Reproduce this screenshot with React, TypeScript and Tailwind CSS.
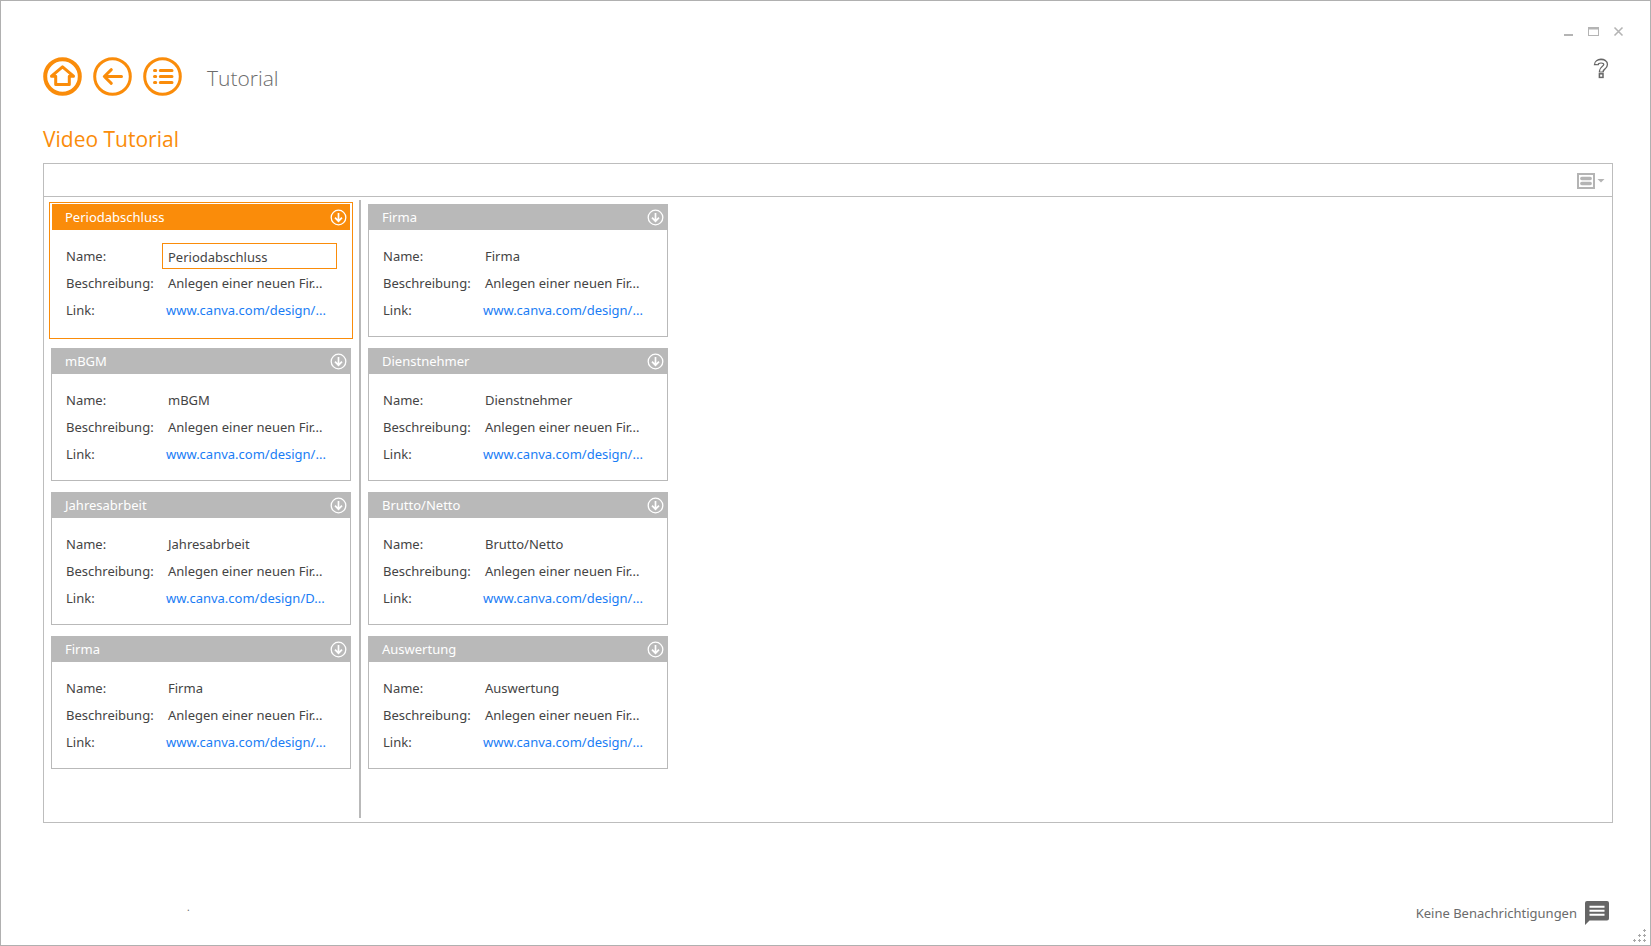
import React from 'react';

interface Tutorial {
  id: number;
  name: string;
  description: string;
  link: string;
}

const DESCRIPTION = 'Anlegen einer neuen Fir...';
const LINK = 'www.canva.com/design/...';

// Cards are filled column by column
const COLUMNS: Tutorial[][] = [
  [
    { id: 1, name: 'Periodabschluss', description: DESCRIPTION, link: LINK },
    { id: 2, name: 'mBGM', description: DESCRIPTION, link: LINK },
    { id: 3, name: 'Jahresabrbeit', description: DESCRIPTION, link: 'ww.canva.com/design/D...' },
    { id: 4, name: 'Firma', description: DESCRIPTION, link: LINK },
  ],
  [
    { id: 5, name: 'Firma', description: DESCRIPTION, link: LINK },
    { id: 6, name: 'Dienstnehmer', description: DESCRIPTION, link: LINK },
    { id: 7, name: 'Brutto/Netto', description: DESCRIPTION, link: LINK },
    { id: 8, name: 'Auswertung', description: DESCRIPTION, link: LINK },
  ],
];

const NavButton: React.FC<{ label: string; ring: number; children: React.ReactNode }> = ({ label, ring, children }) => (
  <button type="button" aria-label={label} className="text-[#fa8c0a]">
    <svg
      viewBox="0 0 39 39"
      className="block size-[39px]"
      fill="none"
      stroke="currentColor"
      strokeWidth="3"
      strokeLinecap="round"
      strokeLinejoin="round"
    >
      <circle cx="19.5" cy="19.5" r={19.3 - ring / 2} strokeWidth={ring} />
      {children}
    </svg>
  </button>
);

const WindowControls = () => (
  <div className="flex items-center gap-3 text-[#b4b4b4]">
    <button type="button" aria-label="Minimieren">
      <svg viewBox="0 0 13 13" className="block size-[13px]">
        <rect x="2" y="9" width="9" height="2" fill="currentColor" />
      </svg>
    </button>
    <button type="button" aria-label="Maximieren">
      <svg viewBox="0 0 13 13" className="block size-[13px]">
        <path d="M1 2h11v9H1zM2 4.500v5.500h9v-5.500z" fill="currentColor" fillRule="evenodd" />
      </svg>
    </button>
    <button type="button" aria-label="Schließen">
      <svg viewBox="0 0 13 13" className="block size-[13px]">
        <path d="M2.500 2.500l8 8M10.500 2.500l-8 8" stroke="currentColor" strokeWidth="1.600" fill="none" />
      </svg>
    </button>
  </div>
);

const HelpIcon = () => (
  <svg viewBox="0 0 16 21" className="block h-[21px] w-4" fill="none">
    {/* Wide grey stroke with a white core gives the hollow question mark */}
    <path d="M3.200 7.200C3.200 1.800 12.600 1.800 12.600 6.600C12.600 9.900 8.200 9.700 8.200 14.600" stroke="#666" strokeWidth="5" />
    <path d="M3.200 6C4 2.500 12.600 2.300 12.600 6.600C12.600 9.900 8.200 9.700 8.200 13.400" stroke="#fff" strokeWidth="2.400" />
    <rect x="6.400" y="15.800" width="3.600" height="3.600" stroke="#666" strokeWidth="1.500" fill="#fff" />
  </svg>
);

const TutorialCard: React.FC<{ item: Tutorial; selected: boolean }> = ({ item, selected }) => (
  <article
    className={
      selected
        ? 'w-[300px] border border-t-0 border-white outline outline-offset-1 outline-[#fa8c0a]'
        : 'w-[300px] border border-t-0 border-[#b9b9b9]'
    }
  >
    <header
      className={
        'flex h-[26px] items-center justify-between pr-[3px] pl-[13px] text-white ' +
        (selected ? 'bg-[#fa8c0a]' : 'bg-[#b9b9b9]')
      }
    >
      <h3 className="pt-0.5 text-[13px]">{item.name}</h3>
      <button type="button" aria-label={`${item.name} aufklappen`}>
        <svg viewBox="0 0 17 17" className="block size-[17px]" fill="none" stroke="currentColor">
          <circle cx="8.500" cy="8.500" r="7.300" strokeWidth="1.300" />
          <path d="M8.500 4v8M5 8.700l3.500 3.500L12 8.700" strokeWidth="1.700" />
        </svg>
      </button>
    </header>
    <div className="grid grid-cols-[96px_175px] auto-rows-[26px] items-center gap-y-px py-[13px] pl-[14px] text-[13px] text-[#444]">
      {selected ? (
        <>
          <label htmlFor="tutorial-name" className="pt-0.5">
            Name:
          </label>
          <input
            id="tutorial-name"
            defaultValue={item.name}
            className="h-[26px] w-full border border-[#fa8c0a] bg-white px-[5px] pt-0.5 outline-none"
          />
        </>
      ) : (
        <>
          <span className="pt-0.5">Name:</span>
          <span className="pt-0.5 pl-[6px]">{item.name}</span>
        </>
      )}
      <span className="pt-0.5">Beschreibung:</span>
      <span className="pt-0.5 pl-[6px] whitespace-nowrap">{item.description}</span>
      <span className="pt-0.5">Link:</span>
      <a href="#" className="pt-0.5 pl-1 whitespace-nowrap text-[#1a7df5]">
        {item.link}
      </a>
    </div>
  </article>
);

export default function App() {
  return (
    <div className="flex min-h-screen flex-col border border-[#b0b0b0] bg-white pr-[37px] pl-[42px] font-['Noto_Sans','Open_Sans',sans-serif]">
      <header className="flex justify-between">
        <div className="flex items-center gap-[11px] pt-14">
          <NavButton label="Startseite" ring={4}>
            <path d="M8.500 19.200L19.500 9.800l11 9.400h-4.200v8.300H12.700v-8.300z" />
          </NavButton>
          <NavButton label="Zurück" ring={3}>
            <path d="M28.500 19.500H11.500M18.300 12.700l-7 6.800 7 6.800" />
          </NavButton>
          <NavButton label="Menü" ring={3}>
            <path d="M11.500 13.600h1.200M17.300 13.600h11.700M11.500 19.500h1.200M17.300 19.500h11.700M11.500 25.400h1.200M17.300 25.400h11.700" />
          </NavButton>
          <h1 className="pt-0.5 pl-[14px] font-['Open_Sans',sans-serif] text-[21px] leading-8 font-light text-[#6b6b6b]">
            Tutorial
          </h1>
        </div>
        <div className="-mr-3 flex flex-col gap-5 pt-6">
          <WindowControls />
          <button type="button" aria-label="Hilfe" className="mr-4 self-end">
            <HelpIcon />
          </button>
        </div>
      </header>

      <h2 className="mt-[27px] font-['Open_Sans',sans-serif] text-[21px] leading-8 text-[#fa8c0a]">Video Tutorial</h2>

      <main className="mt-2 flex flex-1 flex-col border border-[#bdbdbd]">
        <div className="flex h-[33px] items-center justify-end border-b border-[#bdbdbd] pt-0.5 pr-[7px]">
          <button type="button" aria-label="Ansicht wählen" className="text-[#b4b4b4]">
            <svg viewBox="0 0 28 16" className="block h-4 w-7">
              <path d="M0 0h18v16H0zM2 2v12h14V2z" fill="currentColor" fillRule="evenodd" />
              <path d="M4.800 5.500h8.400M4.800 10.500h8.400" stroke="currentColor" strokeWidth="3.400" strokeLinecap="round" />
              <path d="M20.500 6h7L24 9.500z" fill="currentColor" />
            </svg>
          </button>
        </div>
        <div className="flex flex-1 pt-[3px] pb-1">
          {COLUMNS.map((column, index) => (
            <section
              key={index}
              className={
                'flex flex-col gap-[11px] pt-1 pl-[7px] ' + (index === 0 ? 'border-r-2 border-[#b9b9b9] pr-2' : '')
              }
            >
              {column.map((item) => (
                <TutorialCard key={item.id} item={item} selected={item.id === 1} />
              ))}
            </section>
          ))}
        </div>
      </main>

      <footer className="mt-[78px] mb-5 flex items-center justify-between text-[13px] text-[#6b6b6b]">
        <span className="pb-3 pl-36 text-[10px] leading-3">.</span>
        <div className="flex items-center gap-2">
          <span className="pt-0.5">Keine Benachrichtigungen</span>
          <button type="button" aria-label="Benachrichtigungen" className="mr-1">
            <svg viewBox="0 0 24 24" className="block size-6">
              <path d="M2 0h20a2 2 0 0 1 2 2v15.500a2 2 0 0 1-2 2H4.500L0 24V2a2 2 0 0 1 2-2z" fill="#666" />
              <path d="M4.500 5.800h15M4.500 9.800h15M4.500 13.800h15" stroke="#fff" strokeWidth="2" />
            </svg>
          </button>
        </div>
      </footer>

      {/* Resize grip */}
      <svg viewBox="0 0 14 14" className="fixed right-1 bottom-1 size-[14px]" stroke="#a8a8a8" fill="none">
        <path d="M10 2.500h3M11.500 1v3M10 7.500h3M11.500 6v3M5 7.500h3M6.500 6v3M10 12.500h3M11.500 11v3M5 12.500h3M6.500 11v3M0 12.500h3M1.500 11v3" />
      </svg>
    </div>
  );
}
